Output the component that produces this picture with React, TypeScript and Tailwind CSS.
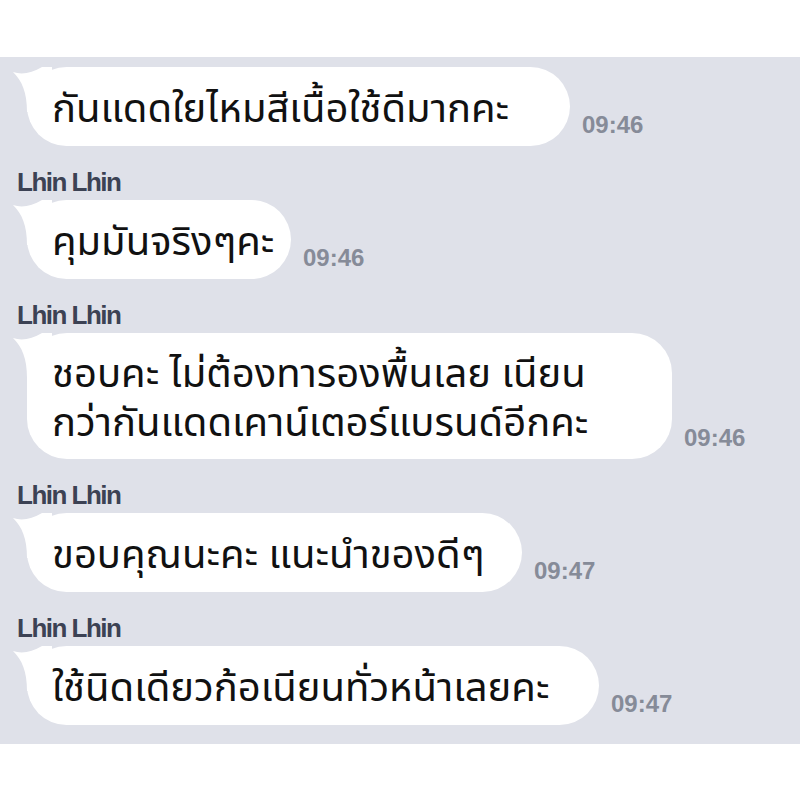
import React from 'react';

type Msg = { name?: string; lines: string[]; time: string; width: string };

const messages: Msg[] = [
  { lines: ['กันแดดใยไหมสีเนื้อใช้ดีมากคะ'], time: '09:46', width: 'w-[543px]' },
  { name: 'Lhin Lhin', lines: ['คุมมันจริงๆคะ'], time: '09:46', width: 'w-[264px]' },
  { name: 'Lhin Lhin', lines: ['ชอบคะ ไม่ต้องทารองพื้นเลย เนียน', 'กว่ากันแดดเคาน์เตอร์แบรนด์อีกคะ'], time: '09:46', width: 'w-[645px]' },
  { name: 'Lhin Lhin', lines: ['ขอบคุณนะคะ แนะนำของดีๆ'], time: '09:47', width: 'w-[495px]' },
  { name: 'Lhin Lhin', lines: ['ใช้นิดเดียวก้อเนียนทั่วหน้าเลยคะ'], time: '09:47', width: 'w-[572px]' },
];

const Tail = () => (
  <svg className="absolute left-[-15px] top-0" width="40" height="45" viewBox="0 0 40 45">
    <path d="M1 5 C10 8 20 6 30 0 L40 0 L40 45 L15 45 C15 25 10 14 1 5 Z" fill="#ffffff" />
  </svg>
);

export default function App() {
  return (
    <div className="w-[800px] h-[800px] bg-white pt-[57px]">
      <div className="h-[687px] bg-[#dfe1e9] pt-[10px] flex flex-col">
        {messages.map((m, i) => {
          const multi = m.lines.length > 1;
          return (
            <div key={i} className={i === 0 ? '' : 'mt-[22px]'}>
              {m.name && (
                <div
                  className="pl-[17px] h-[28px] leading-[28px] text-[26px] font-bold tracking-[-1.5px] text-[#3c4254] mb-[4px]"
                  style={{ fontFamily: '"Liberation Sans", Arial, sans-serif' }}
                >
                  {m.name}
                </div>
              )}
              <div className="flex items-end pl-[27px]">
                <div
                  className={`relative shrink-0 bg-white rounded-[40px] pl-[25px] pr-[20px] ${multi ? 'py-[14px]' : 'py-4'} ${m.width}`}
                >
                  <Tail />
                  <div
                    className={`relative text-[40px] ${multi ? 'leading-[49px]' : 'leading-[47px]'} text-[#111111] whitespace-nowrap`}
                    style={{ fontFamily: '"Noto Sans", "Noto Sans Thai", "DejaVu Sans", sans-serif' }}
                  >
                    {m.lines.map((l, j) => (
                      <div key={j}>{l}</div>
                    ))}
                  </div>
                </div>
                <span
                  className="ml-[12px] mb-[9px] text-[24px] font-bold text-[#868b98] leading-[24px]"
                  style={{ fontFamily: '"Liberation Sans", Arial, sans-serif' }}
                >
                  {m.time}
                </span>
              </div>
            </div>
          );
        })}
      </div>
    </div>
  );
}
